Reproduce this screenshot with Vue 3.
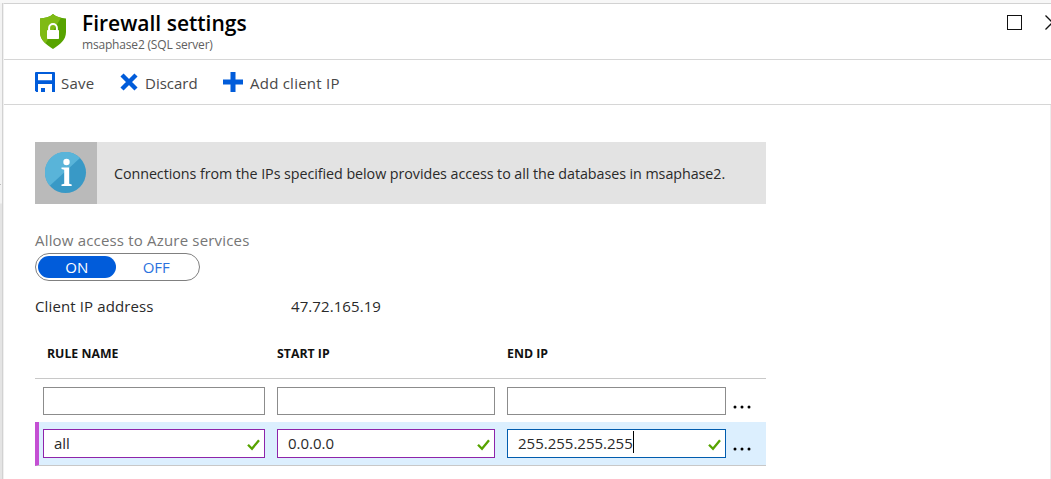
<script setup>
import { ref } from 'vue'

const rules = ref([
  { name: '', start: '', end: '' },
  { name: 'all', start: '0.0.0.0', end: '255.255.255.255', selected: true },
])
const fields = ['name', 'start', 'end']
</script>

<template>
  <div class="frame">
    <div class="gutter"><i class="tick"></i></div>
    <main class="blade">
      <header class="header">
        <svg class="shield" width="26" height="36" viewBox="0 0 26 36">
          <path d="M13 0C10 3 5 4.200 0 4.500V18c0 8 6 12.500 13 17 7-4.500 13-9 13-17V4.500C21 4.200 16 3 13 0Z" fill="#57a300" />
          <path d="M13 0C10 3 5 4.200 0 4.500V18c0 5 2.300 8.500 5.500 11.400L21 3.700C18 3 15 2 13 0Z" fill="#7fba14" />
          <path d="M9.100 17v-3a3.900 3.900 0 0 1 7.800 0v3" fill="none" stroke="#fff" stroke-width="2" />
          <rect x="7" y="16" width="12" height="9" rx=".8" fill="#fff" />
        </svg>
        <div class="heading">
          <h1><span>Firewall settings</span></h1>
          <p><span>msaphase2 (SQL server)</span></p>
        </div>
        <svg class="window" width="44" height="16" viewBox="0 0 44 16">
          <rect x=".5" y=".5" width="14" height="14" fill="none" stroke="#111" />
          <path d="M38.500.500l14 14M38.500 14.500l14-14" stroke="#111" stroke-width="1.300" />
        </svg>
      </header>

      <nav class="toolbar">
        <button class="save">
          <svg width="20" height="20" viewBox="0 0 20 20">
            <path fill="#015cda" fill-rule="evenodd" d="M1 0h18a1 1 0 0 1 1 1v19h-3v-8H3v8H1.500L0 18.500V1a1 1 0 0 1 1-1ZM3 2v6.300h14V2ZM6 16h4v4H6Z" />
            <path fill="#015cda" d="M0 1h3v19H1.500L0 18.500Z" />
          </svg>
          <span>Save</span>
        </button>
        <button class="discard">
          <svg width="18" height="18" viewBox="0 0 18 18"><path d="M2 2l14 14M16 2L2 16" stroke="#015cda" stroke-width="4.400" /></svg>
          <span>Discard</span>
        </button>
        <button class="add">
          <svg width="20" height="20" viewBox="0 0 20 20"><path d="M10 0v20M0 10h20" stroke="#015cda" stroke-width="5" /></svg>
          <span>Add client IP</span>
        </button>
      </nav>

      <section class="content">
        <div class="notice">
          <div class="notice-icon">
            <svg width="42" height="42" viewBox="0 0 42 42">
              <circle cx="20.500" cy="20.500" r="20.500" fill="#3999c6" />
              <path d="M4.800 33.700A20.500 20.500 0 0 1 35 6Z" fill="#59b4d9" />
              <circle cx="21.500" cy="10" r="3.200" fill="#fff" />
              <path d="M16.500 15.500h7.700v16.300l2.500.8v1.400H16.500v-1.400l2.700-.8V17.700l-2.700-.7Z" fill="#fff" />
            </svg>
          </div>
          <p><span>Connections from the IPs specified below provides access to all the databases in msaphase2.</span></p>
        </div>

        <label class="access"><span>Allow access to Azure services</span></label>
        <div class="switch">
          <b><span>ON</span></b>
          <i><span>OFF</span></i>
        </div>

        <div class="client">
          <span class="client-label">Client IP address</span>
          <span class="client-ip">47.72.165.19</span>
        </div>

        <div class="table">
          <div class="thead">
            <span>RULE NAME</span>
            <span>START IP</span>
            <span>END IP</span>
          </div>
          <div v-for="(rule, i) in rules" :key="i" class="row" :class="{ selected: rule.selected }">
            <div v-for="field in fields" :key="field" class="field" :class="field">
              <span class="value">{{ rule[field] }}</span>
              <i v-if="rule.selected && field === 'end'" class="caret"></i>
              <svg v-if="rule.selected" class="check" width="13" height="12" viewBox="0 0 13 12">
                <path d="M1 5.700l4 4L12 1.300" fill="none" stroke="#57a300" stroke-width="2.300" />
              </svg>
            </div>
            <svg class="more" width="16" height="4" viewBox="0 0 16 4">
              <circle cx="2" cy="2" r="1.500" /><circle cx="9" cy="2" r="1.500" /><circle cx="16" cy="2" r="1.500" />
            </svg>
          </div>
        </div>
      </section>
      <div class="edge"></div>
    </main>
  </div>
</template>

<style>
body {
  margin: 0;
  background: #fff;
  overflow: hidden;
}
</style>

<style scoped>
* {
  box-sizing: border-box;
}
.frame {
  display: flex;
  width: 1051px;
  height: 479px;
  border-top: 3px solid #f7f7f7;
  overflow: hidden;
  font-family: "Open Sans", "Noto Sans", sans-serif;
  font-size: 15px;
  color: #2a2a2a;
}
h1, p {
  margin: 0;
}
span {
  white-space: nowrap;
}
.gutter {
  flex: none;
  width: 3px;
  background: linear-gradient(#f3f3f3, #f3f3f3 200px, #e4e4e4 201px);
  border-right: 1px solid #d2d2d2;
}
.tick {
  display: block;
  width: 1px;
  height: 1px;
  margin-top: 181px;
  background: #bbb;
}
.blade {
  flex: 1;
  position: relative;
  border-top: 1px solid #d2d2d2;
  border-left: 1px solid #f0f0f0;
  background: #fff;
}
.header {
  display: flex;
  height: 56px;
  padding: 0 0 0 36px;
  border-bottom: 1px solid #d6d6d6;
}
.shield {
  margin-top: 10px;
}
.heading {
  flex: 1;
  margin-left: 16px;
}
.heading h1 {
  height: 31px;
  padding-top: 4px;
  font-size: 21px;
  line-height: 31px;
  font-weight: 600;
  color: #000;
}
.heading p {
  margin-top: 1px;
  font-size: 12px;
  line-height: 17px;
  letter-spacing: -0.18px;
  color: #606060;
}
.window {
  margin-top: 11px;
}
.toolbar {
  display: flex;
  height: 45px;
  padding-left: 31px;
  border-bottom: 1px solid #d6d6d6;
}
button {
  display: flex;
  align-items: center;
  padding: 0;
  border: 0;
  background: none;
  font: inherit;
  color: #484848;
}
.save {
  width: 85px;
  gap: 6px;
  letter-spacing: 0.2px;
}
.discard {
  width: 103px;
  gap: 7px;
}
.add {
  gap: 7px;
  letter-spacing: 0.24px;
}
.toolbar span {
  padding-top: 2px;
}
.content {
  padding: 37px 0 0 31px;
}
.notice {
  display: flex;
  align-items: center;
  width: 731px;
  height: 62px;
  background: #e3e3e3;
}
.notice-icon {
  display: flex;
  align-items: center;
  justify-content: center;
  width: 62px;
  height: 62px;
  background: #bababa;
}
.notice p {
  margin-left: 17px;
  font-size: 14.300px;
  letter-spacing: -0.060px;
}
.access {
  display: block;
  height: 20px;
  margin-top: 26px;
  line-height: 20px;
  letter-spacing: 0.180px;
  color: #767676;
}
.switch {
  display: flex;
  align-items: center;
  width: 165px;
  height: 28px;
  margin-top: 3px;
  padding: 0 2px;
  border: 1px solid #808080;
  border-radius: 14px;
}
.switch b,
.switch i {
  width: 78px;
  height: 22px;
  border-radius: 11px;
  font-weight: 400;
  font-style: normal;
  line-height: 23px;
  text-align: center;
}
.switch b {
  background: #015cda;
  color: #fff;
}
.switch i {
  width: 82px;
  color: #2b72de;
}
.client {
  display: flex;
  height: 20px;
  margin-top: 15px;
  line-height: 20px;
}
.client-label {
  width: 256px;
  letter-spacing: 0.120px;
}
.client-ip {
  letter-spacing: 0.080px;
}
.table {
  width: 731px;
  margin-top: 1px;
}
.thead {
  display: grid;
  grid-template-columns: 230px 230px 1fr;
  height: 62px;
  padding: 28px 0 0 12px;
  border-bottom: 1px solid #c8c8c8;
  font-size: 12.300px;
  line-height: 18px;
  font-weight: 700;
  color: #111;
}
.row {
  display: grid;
  grid-template-columns: 222px 218px 219px 16px;
  column-gap: 12px;
  height: 43px;
  padding: 8px 0 0 8px;
}
.row.selected {
  height: 44px;
  padding: 7px 0 0 4px;
  border-left: 4px solid #c44fd3;
  border-bottom: 1px solid #c8c8c8;
  background: #dceffe;
}
.field {
  display: flex;
  align-items: center;
  height: 28px;
  padding-left: 10px;
  border: 1px solid #8c8c8c;
  background: #fff;
}
.selected .field {
  height: 29px;
  border-color: #8e24aa;
}
.selected .field.end {
  border-color: #015cae;
}
.value {
  padding-bottom: 2px;
}
.caret {
  width: 1px;
  height: 22px;
  margin-top: -3px;
  background: #000;
}
.check {
  margin: 2px 4px 0 auto;
}
.more {
  margin: 18px 0 0 -5px;
  overflow: visible;
  fill: #000;
}
.edge {
  position: absolute;
  top: 101px;
  right: 0;
  bottom: 0;
  width: 1px;
  background: #ececec;
}
</style>
